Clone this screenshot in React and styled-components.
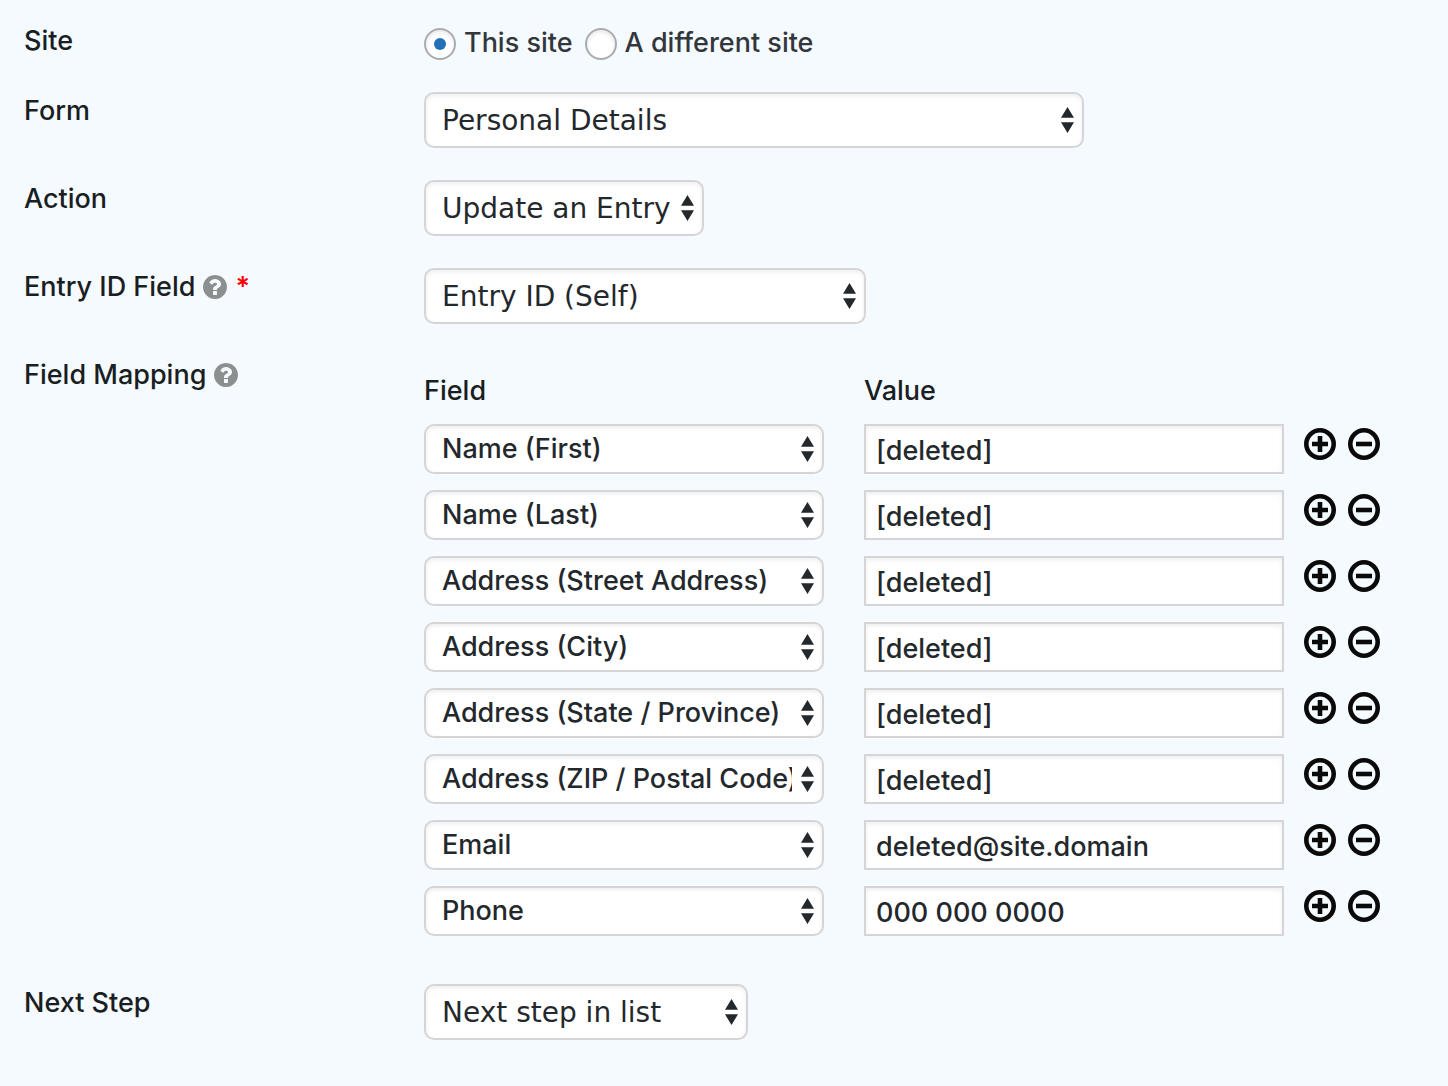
import React from 'react'
import styled, { createGlobalStyle } from 'styled-components'

const GlobalStyle = createGlobalStyle`
  *,
  *::before,
  *::after {
    box-sizing: border-box;
  }

  body {
    margin: 0;
    background-color: #f5faff;
    color: #191e23;
    font-family: Inter, 'Liberation Sans', sans-serif;
    font-size: 27px;
    font-weight: 450;
    line-height: 38px;
  }
`

const Settings = styled.form`
  display: flex;
  flex-direction: column;
  gap: 32px;
  padding: 22px 24px 46px;
`

const Row = styled.div`
  display: grid;
  grid-template-columns: 400px minmax(0, 1fr);
  align-items: start;
`

const RowLabel = styled.label`
  display: flex;
  align-items: center;
  gap: 8px;
`

const RadioGroup = styled.div`
  display: flex;
  gap: 12px;
  padding-top: 2px;
`

const RadioLabel = styled.label`
  display: flex;
  align-items: flex-end;
  gap: 8px;
  color: #32373c;
`

const Radio = styled.input`
  appearance: none;
  flex: none;
  display: grid;
  place-items: center;
  width: 32px;
  height: 32px;
  margin: 0;
  border: 2px solid #a8acb0;
  border-radius: 50%;
  background-color: #fff;
  box-shadow: inset 0 2px 4px rgba(0, 0, 0, 0.1);

  &:checked::before {
    content: '';
    width: 12px;
    height: 12px;
    border-radius: 50%;
    background-color: #2271b8;
  }
`

const RadioText = styled.span`
  height: 36px;
`

const SelectWrapper = styled.div`
  display: grid;
  align-items: center;
  width: ${props => props.$width}px;
  max-width: 100%;

  & > * {
    grid-area: 1 / 1;
  }
`

const StyledSelect = styled.select`
  appearance: none;
  width: 100%;
  height: ${props => (props.$large ? '56px' : '50px')};
  margin: 0;
  padding: ${props => (props.$large ? '0 30px 0 16px' : '0 30px 2px 16px')};
  border: 2px solid #d5d5d7;
  border-radius: 10px;
  background-color: #fff;
  box-shadow: inset 0 2px 4px rgba(0, 0, 0, 0.07);
  color: #23282d;
  font-family: ${props =>
    props.$large ? "'DejaVu Sans', sans-serif" : 'inherit'};
  font-size: ${props => (props.$large ? '28px' : '27px')};
  font-weight: inherit;
`

const Arrows = styled.svg`
  justify-self: end;
  margin-right: 10px;
  fill: #23282d;
  pointer-events: none;
`

const HelpButton = styled.button`
  display: flex;
  padding: 0;
  border: none;
  background: none;
  color: #8c8f8f;
  cursor: help;
`

const Required = styled.span`
  color: #f00;
  font-weight: 600;
`

const Mapping = styled.table`
  width: 960px;
  max-width: 100%;
  margin: 16px 0;
  border-collapse: collapse;
  table-layout: fixed;
`

const HeadCell = styled.th`
  width: ${props => props.$width}px;
  padding: 2px 0 0;
  font-weight: inherit;
  line-height: 34px;
  text-align: left;
`

const Cell = styled.td`
  padding: 16px ${props => props.$gap || 0}px 0 0;
  vertical-align: top;
`

const TextInput = styled.input`
  display: block;
  width: 100%;
  height: 50px;
  margin: 0;
  padding: 2px 10px 0;
  border: 2px solid #d5d5d7;
  border-radius: 0;
  background-color: #fff;
  box-shadow: inset 0 2px 4px rgba(0, 0, 0, 0.07);
  color: #23282d;
  font: inherit;
`

const Actions = styled.div`
  display: flex;
  gap: 12px;
  padding-top: 4px;
`

const IconButton = styled.button`
  display: flex;
  padding: 0;
  border: none;
  background: none;
  color: #0a0a0a;
  cursor: pointer;
`

const mappings = [
  { field: 'Name (First)', value: '[deleted]' },
  { field: 'Name (Last)', value: '[deleted]' },
  { field: 'Address (Street Address)', value: '[deleted]' },
  { field: 'Address (City)', value: '[deleted]' },
  { field: 'Address (State / Province)', value: '[deleted]' },
  { field: 'Address (ZIP / Postal Code)', value: '[deleted]' },
  { field: 'Email', value: 'deleted@site.domain' },
  { field: 'Phone', value: '000 000 0000' },
]

const fieldNames = mappings.map(mapping => mapping.field)

const Select = ({ options, width, large, ...rest }) => (
  <SelectWrapper $width={width}>
    <StyledSelect $large={large} {...rest}>
      {options.map(option => (
        <option key={option}>{option}</option>
      ))}
    </StyledSelect>
    <Arrows width="13" height="26" viewBox="0 0 13 26" aria-hidden="true">
      <path d="M6.5 0L13 10.7H0zM0 15.3h13L6.5 26z" />
    </Arrows>
  </SelectWrapper>
)

const Help = ({ label }) => (
  <HelpButton type="button" aria-label={label}>
    <svg width="24" height="24" viewBox="128 128 1536 1536" fill="currentColor">
      <path d="M1024 1376v-192q0-14-9-23t-23-9h-192q-14 0-23 9t-9 23v192q0 14 9 23t23 9h192q14 0 23-9t9-23zm256-672q0-88-55.5-163t-138.5-116-170-41q-243 0-371 213-15 24 8 42l132 100q7 6 19 6 16 0 25-12 53-68 86-92 34-24 86-24 48 0 85.5 26t37.5 59q0 38-20 61t-68 45q-63 28-115.5 86.5t-52.5 125.5v36q0 14 9 23t23 9h192q14 0 23-9t9-23q0-19 21.5-49.5t54.5-49.5q32-18 49-28.5t46-35 44.5-48 28-60.5 12.5-81zm384 192q0 209-103 385.5t-279.5 279.5-385.5 103-385.5-103-279.5-279.5-103-385.5 103-385.5 279.5-279.5 385.5-103 385.5 103 279.5 279.5 103 385.5z" />
    </svg>
  </HelpButton>
)

const CircleButton = ({ label, plus }) => (
  <IconButton type="button" aria-label={label}>
    <svg
      width="32"
      height="32"
      viewBox="0 0 32 32"
      fill="none"
      stroke="currentColor"
      strokeWidth="4.6"
    >
      <circle cx="16" cy="16" r="13.7" />
      <path d={plus ? 'M8 16h16M16 8v16' : 'M8 16h16'} />
    </svg>
  </IconButton>
)

export default class App extends React.Component {
  render() {
    return (
      <>
        <GlobalStyle />
        <Settings>
          <Row role="radiogroup" aria-labelledby="site-label">
            <RowLabel as="div" id="site-label">
              Site
            </RowLabel>
            <RadioGroup>
              <RadioLabel>
                <Radio type="radio" name="site" value="this" defaultChecked />
                <RadioText>This site</RadioText>
              </RadioLabel>
              <RadioLabel>
                <Radio type="radio" name="site" value="different" />
                <RadioText>A different site</RadioText>
              </RadioLabel>
            </RadioGroup>
          </Row>

          <Row>
            <RowLabel htmlFor="form">Form</RowLabel>
            <Select id="form" large width={660} options={['Personal Details']} />
          </Row>

          <Row>
            <RowLabel htmlFor="action">Action</RowLabel>
            <Select id="action" large width={280} options={['Update an Entry']} />
          </Row>

          <Row>
            <RowLabel as="div">
              <label htmlFor="entry-id">Entry ID Field</label>
              <Help label="About the entry ID field" />
              <Required>*</Required>
            </RowLabel>
            <Select id="entry-id" large width={442} options={['Entry ID (Self)']} />
          </Row>

          <Row>
            <RowLabel as="div">
              <span id="mapping-label">Field Mapping</span>
              <Help label="About field mapping" />
            </RowLabel>
            <Mapping aria-labelledby="mapping-label">
              <thead>
                <tr>
                  <HeadCell $width={440}>Field</HeadCell>
                  <HeadCell $width={440}>Value</HeadCell>
                  <HeadCell as="td" />
                </tr>
              </thead>
              <tbody>
                {mappings.map(({ field, value }) => (
                  <tr key={field}>
                    <Cell $gap={40}>
                      <Select
                        width={400}
                        options={fieldNames}
                        defaultValue={field}
                        aria-label="Field"
                      />
                    </Cell>
                    <Cell $gap={20}>
                      <TextInput
                        type="text"
                        defaultValue={value}
                        aria-label={`Value for ${field}`}
                      />
                    </Cell>
                    <Cell>
                      <Actions>
                        <CircleButton plus label="Add row" />
                        <CircleButton label="Remove row" />
                      </Actions>
                    </Cell>
                  </tr>
                ))}
              </tbody>
            </Mapping>
          </Row>

          <Row>
            <RowLabel htmlFor="next-step">Next Step</RowLabel>
            <Select
              id="next-step"
              large
              width={324}
              options={['Next step in list']}
            />
          </Row>
        </Settings>
      </>
    )
  }
}
